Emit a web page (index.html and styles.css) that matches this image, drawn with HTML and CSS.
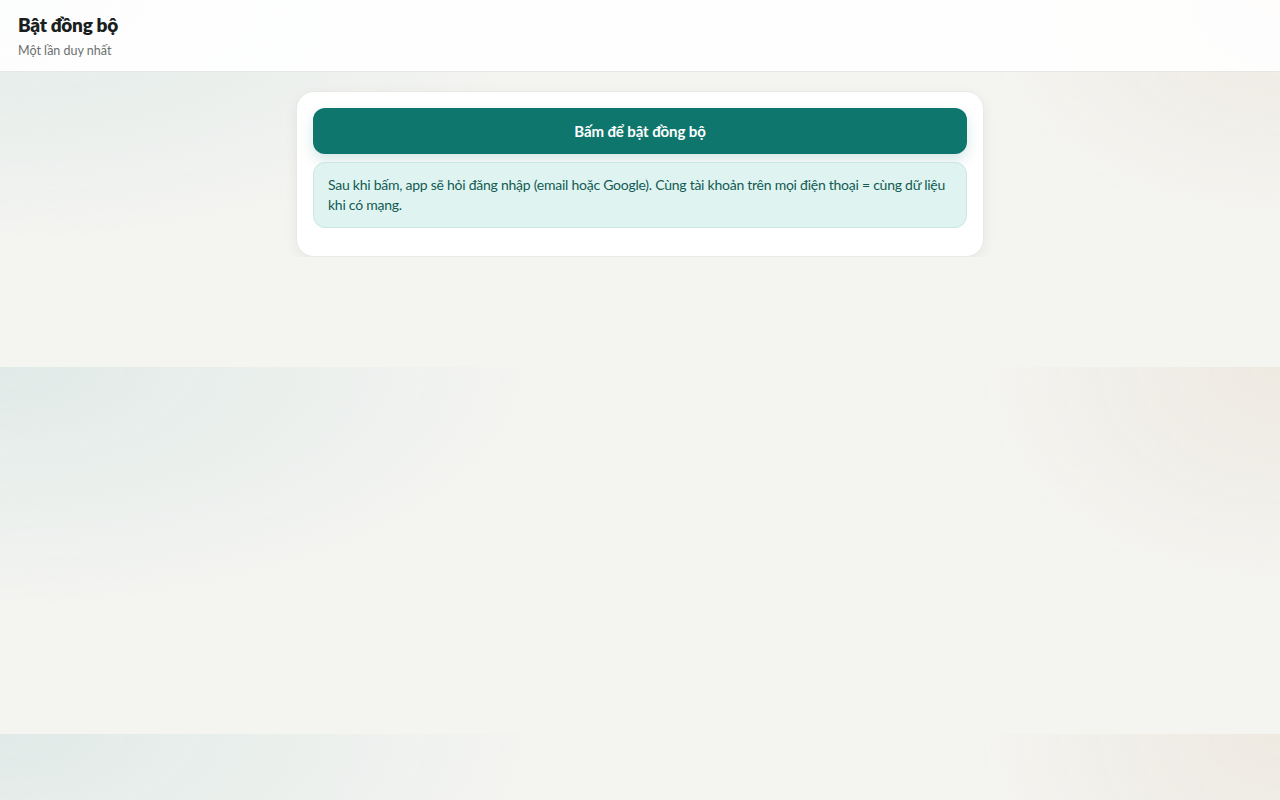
FILE: index.html
```html
<!DOCTYPE html>
<html lang="vi">
<head>
<meta charset="utf-8">
<title>Bật đồng bộ</title>
<link rel="stylesheet" href="styles.css">
</head>
<body>
<header class="topbar">
  <h1 class="title">Bật đồng bộ</h1>
  <p class="subtitle">Một lần duy nhất</p>
</header>
<main class="main">
  <section class="card">
    <button class="btn-primary" type="button">Bấm để bật đồng bộ</button>
    <div class="info">Sau khi bấm, app sẽ hỏi đăng nhập (email hoặc Google). Cùng tài khoản trên mọi điện thoại = cùng dữ liệu khi có mạng.</div>
  </section>
</main>
</body>
</html>
```
FILE: styles.css
```css
* { box-sizing: border-box; }
html {
  background-color: #f4f4f1;
  background-image:
    radial-gradient(ellipse 70% 110% at 0% 0%, rgba(214,229,227,0.65), rgba(214,229,227,0) 60%),
    radial-gradient(ellipse 35% 90% at 100% 0%, rgba(236,230,220,0.75), rgba(236,230,220,0) 70%);
  background-size: 100% 367px;
  background-repeat: repeat;
}
body {
  margin: 0;
  font-family: "Lato", "Noto Sans", sans-serif;
  color: #1c2322;
}
.topbar {
  height: 72px;
  padding: 12px 18px 0;
  background: rgba(255,255,255,0.9);
  border-bottom: 1px solid #e6e8e5;
}
.title {
  margin: 0;
  font-size: 19px;
  line-height: 26px;
  font-weight: 800;
  letter-spacing: -0.3px;
  color: #1a1f1e;
}
.subtitle {
  margin: 4px 0 0;
  font-size: 12.5px;
  line-height: 18px;
  color: #6b706f;
}
.main {
  padding: 19px 16px 0;
  display: flex;
  justify-content: center;
}
.card {
  width: 688px;
  background: #fff;
  border: 1px solid #e9e9e5;
  border-radius: 18px;
  padding: 16px 16px 28px;
  display: flex;
  flex-direction: column;
  gap: 8px;
  box-shadow: 0 4px 14px rgba(30,40,38,0.06);
}
.btn-primary {
  height: 46px;
  border: none;
  border-radius: 12px;
  background: #0f766e;
  color: #fff;
  font-family: inherit;
  font-size: 15px;
  font-weight: 700;
  letter-spacing: -0.1px;
  box-shadow: 0 6px 14px rgba(15,118,110,0.18);
  cursor: pointer;
}
.info {
  background: #dff4f1;
  border: 1px solid #c9e6e2;
  border-radius: 12px;
  padding: 12px 14px;
  font-size: 14px;
  line-height: 20px;
  letter-spacing: -0.25px;
  color: #135a53;
}
```
